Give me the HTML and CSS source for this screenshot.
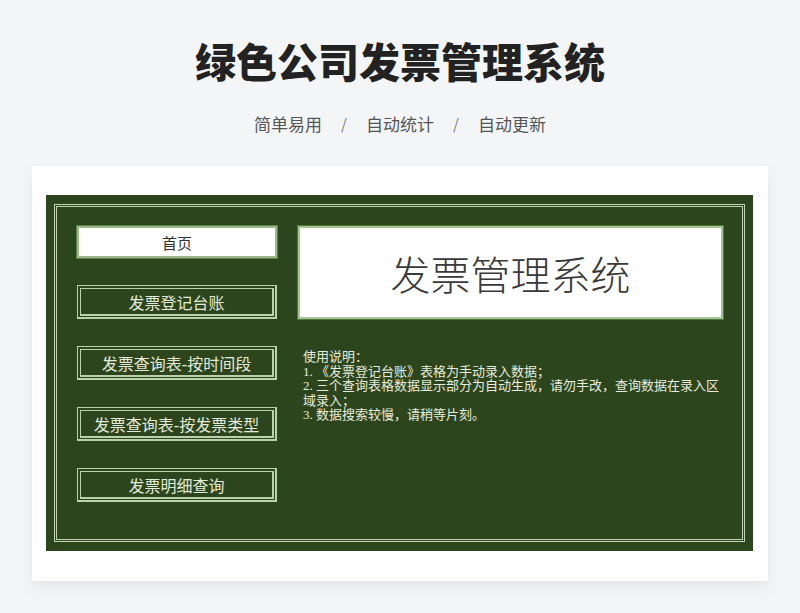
FILE: index.html
```html
<!DOCTYPE html>
<html lang="zh">
<head>
<meta charset="utf-8">
<title>绿色公司发票管理系统</title>
<link rel="stylesheet" href="styles.css">
</head>
<body>
<header class="hero">
  <h1 class="hero-title">绿色公司发票管理系统</h1>
  <div class="hero-sub">
    <span>简单易用</span><span class="sep">/</span><span>自动统计</span><span class="sep">/</span><span>自动更新</span>
  </div>
</header>
<main class="card">
  <div class="board">
    <div class="frame">
      <nav class="menu">
        <div class="btn btn-home">首页</div>
        <div class="btn">发票登记台账</div>
        <div class="btn">发票查询表-按时间段</div>
        <div class="btn">发票查询表-按发票类型</div>
        <div class="btn">发票明细查询</div>
      </nav>
      <section class="content">
        <div class="sys-title">发票管理系统</div>
        <div class="notes">
          <p>使用说明：</p>
          <p>1. 《发票登记台账》表格为手动录入数据；</p>
          <p>2. 三个查询表格数据显示部分为自动生成，请勿手改，查询数据在录入区域录入；</p>
          <p>3. 数据搜索较慢，请稍等片刻。</p>
        </div>
      </section>
    </div>
  </div>
</main>
</body>
</html>
```
FILE: styles.css
```css
* { box-sizing: border-box; }
html, body { margin: 0; padding: 0; }
body {
  background: #f4f5f7;
  font-family: "Noto Sans CJK SC", "Noto Sans", sans-serif;
  width: 800px;
  height: 613px;
  overflow: hidden;
}
.hero { text-align: center; padding-top: 35px; }
.hero-title {
  margin: 0;
  font-size: 41px;
  line-height: 50px;
  font-weight: 900;
  color: #222;
  letter-spacing: 0;
}
.hero-sub {
  margin-top: 27px;
  display: flex;
  justify-content: center;
  gap: 19px;
  font-size: 17px;
  line-height: 24px;
  color: #555;
}
.hero-sub .sep { color: #777; font-size: 15px; }
.card {
  margin: 30px 32px 0;
  height: 415px;
  background: #fff;
  padding: 29px 15px 30px 14px;
  box-shadow: 0 6px 14px rgba(40, 50, 70, 0.08);
}
.board {
  height: 356px;
  background: #2d451c;
  padding: 9px 8px 9px 8px;
}
.frame {
  height: 100%;
  border: 3px double #c3d5b6;
  padding: 19px 19px 0 20px;
  display: flex;
  gap: 21px;
}
.menu {
  width: 200px;
  display: flex;
  flex-direction: column;
  gap: 27px;
}
.btn {
  height: 34px;
  border: 4px double #bcd0ad;
  border-bottom-width: 5px;
  border-right-width: 5px;
  display: flex;
  align-items: center;
  justify-content: center;
  color: #e2eadb;
  font-family: "Liberation Serif", "Noto Sans CJK SC", serif;
  font-size: 16px;
}
.btn-home {
  height: 32px;
  background: #fff;
  border: 2px solid #9cb98a;
  box-shadow: 0 0 0 1px #5c7e48;
  color: #333;
  font-size: 15px;
}
.content { width: 425px; }
.sys-title {
  height: 93px;
  background: #fff;
  border: 2px solid #a8c298;
  box-shadow: 0 0 0 1px #4d7a3a;
  display: flex;
  align-items: center;
  justify-content: center;
  font-family: "Liberation Serif", "Noto Sans CJK SC", serif;
  font-size: 40px;
  font-weight: 300;
  color: #3a3a3a;
}
.notes {
  margin-top: 31px;
  padding-left: 5px;
  width: 423px;
  color: #e6ecdf;
  font-family: "Liberation Serif", "Noto Sans CJK SC", serif;
  font-size: 13px;
  line-height: 14.5px;
}
.notes p { margin: 0; }
```
